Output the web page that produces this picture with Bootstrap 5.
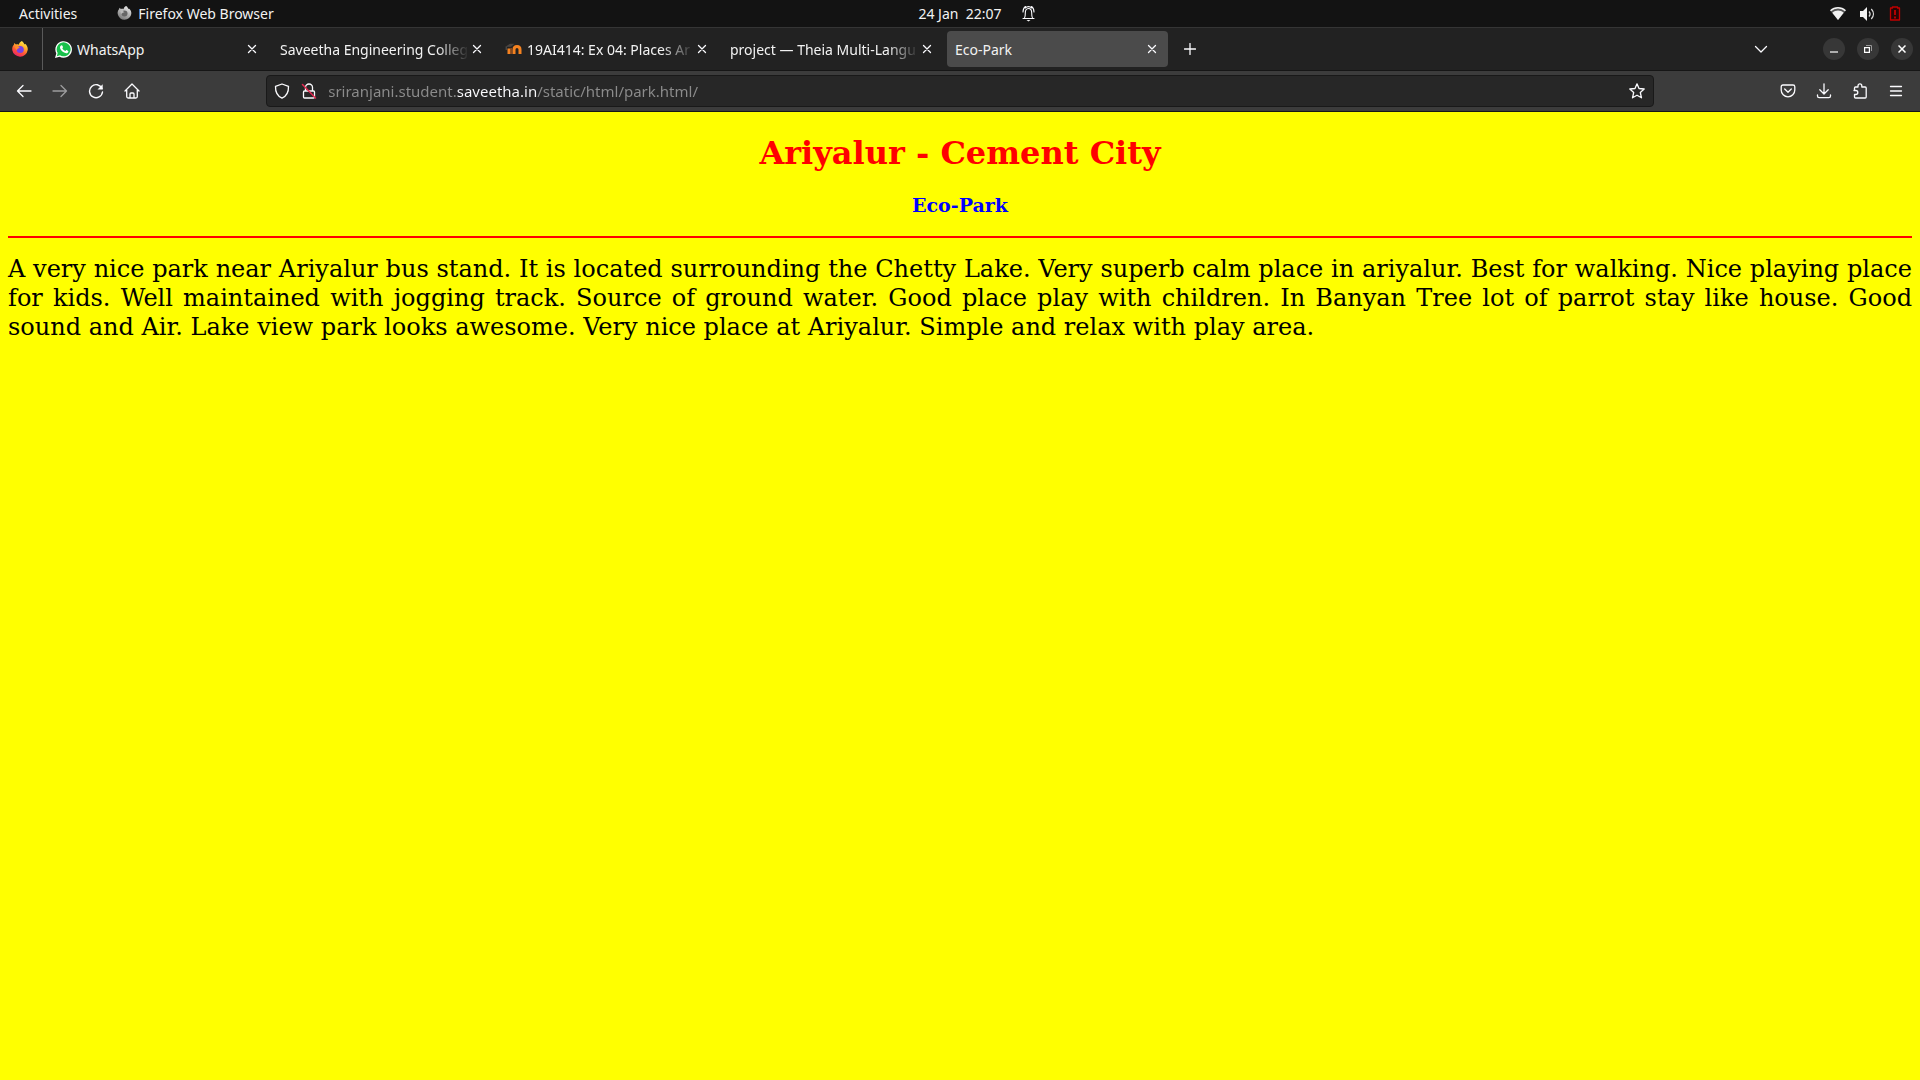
<!DOCTYPE html>
<html lang="en">
<head>
<meta charset="utf-8">
<meta name="viewport" content="width=device-width, initial-scale=1">
<title>Eco-Park</title>
<link href="https://cdn.jsdelivr.net/npm/bootstrap@5.3.0/dist/css/bootstrap.min.css" rel="stylesheet">
<style>
  body { font-family: "Noto Sans", sans-serif; font-size: 14px; line-height: 20px; color: #f2f2f2; background: #ff0; }
  svg { display: block; flex: none; }
  .ico { fill: none; stroke: #fbfbfe; stroke-width: 1.3; stroke-linecap: round; stroke-linejoin: round; }
  .plain { border: 0; padding: 0; background: none; color: inherit; display: flex; align-items: center; justify-content: center; }
  .system-bar { height: 27px; padding: 0 19px; background: #131313; }
  .system-bar .app-menu { margin-left: 40px; gap: 6px; }
  .status-icons { gap: 14px; }
  .tab-strip { height: 44px; padding-right: 7px; background: #222; border-top: 1px solid #353535; border-bottom: 1px solid #161616; }
  .pinned { width: 43px; padding-right: 2px; border-right: 1px solid #5a5a5a; }
  .tab-item { width: 221px; height: 36px; padding: 0 8px; border-radius: 4px; }
  .tab-item.current { background: #4b4b4b; }
  .tab-label { flex: 1 1 0; min-width: 0; padding-top: 2px; overflow: hidden; white-space: nowrap; color: inherit; text-decoration: none; }
  .tab-label.fades { -webkit-mask-image: linear-gradient(to left, transparent, #000 32px); mask-image: linear-gradient(to left, transparent, #000 32px); }
  .tab-close { width: 16px; height: 20px; }
  .win-group { gap: 12px; margin-left: 44px; }
  .win-btn { width: 22px; height: 22px; border-radius: 50%; background: #373737; }
  .tool-bar { height: 41px; padding: 0 6px; background: #3c3c3c; border-bottom: 1px solid #161616; }
  .tool-btn { width: 36px; height: 32px; }
  .spring { flex: 1 1 0; }
  .address { flex: 12 1 0; height: 32px; margin: 0 2px; padding: 0 8px 0 7px; gap: 11px; background: #272727; border: 1px solid #191919; border-radius: 4px; }
  .address input { flex: 1; min-width: 0; height: 24px; border: 0; padding: 0; outline: 0; font-size: 15px;
    color: transparent; caret-color: #fff;
    background: linear-gradient(to right, #8c8c8c 128px, #fbfbfe 128px 209px, #8c8c8c 209px);
    -webkit-background-clip: text; background-clip: text; }
  .park { padding: 22px 8px; color: #000; font-family: "DejaVu Serif", serif; }
  .park h1 { margin: 0 0 22px; font-size: 32px; line-height: 38px; font-weight: 700; color: #f00; }
  .park h2 { margin: 0 0 20px; font-size: 19px; line-height: 22px; font-weight: 700; color: #00f; }
  .park hr { margin: 0 0 17px; border-top: 2px solid #f00; opacity: 1; }
  .park p { margin: 0; font-size: 24px; line-height: 29px; text-align: justify; }
</style>
<script src="https://cdn.jsdelivr.net/npm/bootstrap@5.3.0/dist/js/bootstrap.bundle.min.js"></script>
</head>
<body>
<svg width="0" height="0" class="position-absolute" aria-hidden="true">
  <defs>
    <linearGradient id="flame" x1=".8" y1="0" x2=".3" y2="1"><stop offset="0" stop-color="#fff44f"/><stop offset=".35" stop-color="#ffb02a"/><stop offset=".65" stop-color="#ff5a35"/><stop offset="1" stop-color="#e81f6b"/></linearGradient>
    <linearGradient id="ash" x1=".8" y1="0" x2=".3" y2="1"><stop offset="0" stop-color="#eee"/><stop offset="1" stop-color="#777"/></linearGradient>
    <path id="fox" d="M9.8 0C11.8 1.2 12 2.8 12.4 3.5L13 2.8C15.2 4.4 16 6.6 15.7 9A7.8 7.8 0 0 1 .3 9.2C-.1 6.8.7 4.8 2 3.4L2.2 1.9 4 3.5C5 3.1 6 3.2 6.8 3.7 7.1 2 8.3.7 9.8 0Z"/>
    <symbol id="cross" viewBox="0 0 10 10"><path d="M1.5 1.5l7 7m0-7l-7 7"/></symbol>
  </defs>
</svg>

<header>
  <div class="system-bar d-flex align-items-center">
    <div class="spring d-flex align-items-center">
      <button class="plain" type="button">Activities</button>
      <button class="plain app-menu" type="button">
        <svg width="15" height="15" viewBox="0 0 16 17"><use href="#fox" fill="url(#ash)"/><circle cx="8" cy="8.5" r="3.4" fill="#666"/><path d="M3 5.500c2-.6 4 .2 5 1.500-2 0-2 1-3.500 2" fill="#bbb"/></svg>
        Firefox Web Browser
      </button>
    </div>
    <button class="plain" type="button">24 Jan&nbsp; 22:07</button>
    <div class="spring d-flex align-items-center justify-content-between">
      <svg class="ms-3 ico" width="20" height="17" viewBox="-2 0 20 17"><path d="M3 13.500h11M4.500 13c.8-1 .8-2.500.8-5C5.300 5.500 6.300 3.500 8.500 3.500s3.200 2 3.200 4.500c0 2.500 0 4 .8 5M3 7c0-2.300.8-4.300 2.500-5.500M14 7c0-2.300-.8-4.300-2.500-5.500M5.500 3C6.500 1.200 10.500 1.200 11.500 3" stroke-width="1.100"/><path d="M6.500 15h4l-2 1.600z" fill="#eee" stroke="none"/></svg>
      <div class="status-icons d-flex align-items-center">
        <svg width="16" height="14" viewBox="0 0 16 14"><path d="M.5 4C4.500-.3 11.500-.3 15.500 4L8 13z" fill="#555"/><path d="M.5 3.800C4.800-.2 11.200-.2 15.500 3.800" fill="none" stroke="#f2f2f2" stroke-width="1.500"/><path d="M2.300 5.800c3.200-3 8.200-3 11.400 0L8 13z" fill="#f2f2f2"/></svg>
        <svg width="15" height="14" viewBox="0 0 15 14"><path d="M0 4h3l4-4v14l-4-4H0z" fill="#f2f2f2"/><path d="M9 4.500c1.300 1.500 1.300 3.500 0 5M11.300 2c2.800 3 2.800 7 0 10" fill="none" stroke="#ddd" stroke-width="1.300"/></svg>
        <svg width="12" height="15" viewBox="0 0 12 15"><path d="M1.500 2h2v-1h5v1h2v12h-9z" fill="#250505" stroke="#c00000" stroke-width="1.300" stroke-linejoin="round"/><path d="M5 4h2v5H5zm0 6.500h2v2H5z" fill="#b00000"/></svg>
      </div>
    </div>
  </div>

  <nav class="tab-strip d-flex align-items-center" aria-label="Tabs">
    <a href="#" class="pinned h-100 d-flex align-items-center justify-content-center me-1" aria-label="Pinned tab">
      <svg width="16" height="17" viewBox="0 0 16 17"><use href="#fox" fill="url(#flame)"/><circle cx="8.200" cy="8.500" r="3.600" fill="#7542e5"/><path d="M2.500 5.500c2-1 4.300-.2 5.200 1.400-2 .1-2.200 1.200-3.200 2.300" fill="#ff8b2d"/></svg>
    </a>
    <div class="d-flex gap-1">
      <div class="tab-item d-flex align-items-center">
        <svg class="me-1" width="18" height="17" viewBox="0 0 18 17"><path d="M0 17l1.300-4.600A8.300 8.300 0 1 1 4.500 15.700z" fill="#fff"/><path d="M1.800 15.200l.9-3.200a7 7 0 1 1 2.300 2.300z" fill="#18c14b"/><path d="M6.200 4.400c.5-.4 1-.2 1.200.3l.6 1.400c.1.400-.5.900-.7 1.200.8 1.500 1.700 2.200 3.100 2.800.4-.4.800-1.200 1.200-1l1.600.8c.5.300 0 1.600-.7 2-1.200.7-3 .1-4.400-.9C6.300 9.700 4.900 8 5 6.300c0-.7.500-1.500 1.200-1.900z" fill="#fff"/></svg>
        <a href="#" class="tab-label">WhatsApp</a>
        <button class="plain tab-close" type="button" aria-label="Close tab"><svg class="ico" width="10" height="10"><use href="#cross"/></svg></button>
      </div>
      <div class="tab-item d-flex align-items-center">
        <a href="#" class="tab-label fades">Saveetha Engineering Colleg</a>
        <button class="plain tab-close" type="button" aria-label="Close tab"><svg class="ico" width="10" height="10"><use href="#cross"/></svg></button>
      </div>
      <div class="tab-item d-flex align-items-center">
        <svg class="me-1" width="18" height="12" viewBox="0 0 18 12"><path d="M0 4L5 .8 9.500.8 6 3.800z" fill="#4a4542"/><path d="M1.200 4v3" stroke="#666" stroke-width=".8"/><path d="M4 11V5.500M9 11V6.500C9 2.500 15 2.500 15 6.500V11" fill="none" stroke="#f58220" stroke-width="3"/><path d="M6.200 11V5" stroke="#b9591a" stroke-width="1"/></svg>
        <a href="#" class="tab-label fades">19AI414: Ex 04: Places Ar</a>
        <button class="plain tab-close" type="button" aria-label="Close tab"><svg class="ico" width="10" height="10"><use href="#cross"/></svg></button>
      </div>
      <div class="tab-item d-flex align-items-center">
        <a href="#" class="tab-label fades">project — Theia Multi-Langu</a>
        <button class="plain tab-close" type="button" aria-label="Close tab"><svg class="ico" width="10" height="10"><use href="#cross"/></svg></button>
      </div>
      <div class="tab-item current d-flex align-items-center">
        <a href="#" class="tab-label" aria-current="page">Eco-Park</a>
        <button class="plain tab-close" type="button" aria-label="Close tab"><svg class="ico" width="10" height="10"><use href="#cross"/></svg></button>
      </div>
    </div>
    <button class="plain tool-btn ms-1" type="button" aria-label="New tab"><svg class="ico" width="12" height="12"><path d="M6 .5v11M.5 6h11"/></svg></button>
    <div class="d-flex align-items-center ms-auto">
      <button class="plain tool-btn" type="button" aria-label="List all tabs"><svg class="ico" width="14" height="8"><path d="M1.500 1.500L7 7l5.500-5.500"/></svg></button>
      <div class="win-group d-flex">
        <button class="plain win-btn" type="button" aria-label="Minimize"><svg width="8" height="8"><path d="M0 7h8" stroke="#fff" stroke-width="1.200"/></svg></button>
        <button class="plain win-btn" type="button" aria-label="Restore"><svg width="8" height="8" fill="none"><path d="M.6 2.600h4.800v4.800H.6z" stroke="#fff" stroke-width="1.200"/><path d="M2 .5h5.500V6" stroke="#999"/></svg></button>
        <button class="plain win-btn" type="button" aria-label="Close window"><svg width="8" height="8"><path d="M.5.5l7 7m0-7l-7 7" stroke="#fff" stroke-width="1.500"/></svg></button>
      </div>
    </div>
  </nav>

  <div class="tool-bar d-flex align-items-center">
    <button class="plain tool-btn" type="button" aria-label="Back"><svg class="ico" width="16" height="16"><path d="M15 8H1.500M7 2.500L1.500 8 7 13.500"/></svg></button>
    <button class="plain tool-btn" type="button" aria-label="Forward"><svg class="ico opacity-50" width="16" height="16"><path d="M1 8h13.500M9 2.500L14.500 8 9 13.500"/></svg></button>
    <button class="plain tool-btn" type="button" aria-label="Reload"><svg class="ico" width="16" height="16"><path d="M14 5.500A6.500 6.500 0 1 0 14.500 9" stroke-width="1.400"/><path d="M14.700 1.300v5.200H9.500z" fill="#fbfbfe" stroke="none"/></svg></button>
    <button class="plain tool-btn" type="button" aria-label="Home"><svg class="ico" width="16" height="16"><path d="M1 8l7-7 7 7M2.700 7v6.500q0 1.500 1.500 1.500h7.600q1.500 0 1.500-1.500V7M6 15v-4q0-1 1-1h2q1 0 1 1v4"/></svg></button>
    <div class="spring"></div>
    <div class="address d-flex align-items-center">
      <svg class="ico" width="16" height="16"><path d="M8 1L14.500 3.300C14.700 9 12.500 13.200 8 15.200 3.500 13.200 1.300 9 1.500 3.300z"/></svg>
      <svg class="ico" width="16" height="16"><path d="M3.500 8h9q1 0 1 1v5q0 1-1 1h-9q-1 0-1-1V9q0-1 1-1zM4.500 8V4.500a3.500 3.500 0 0 1 7 0V8"/><path d="M1.500 1.500l13 13.500" stroke="#e22850" stroke-width="1.500"/></svg>
      <input type="text" aria-label="Address" value="sriranjani.student.saveetha.in/static/html/park.html/" spellcheck="false">
      <button class="plain" type="button" aria-label="Bookmark this page"><svg class="ico" width="16" height="16"><path d="M8 .8l2 4.700 5.200.5-3.900 3.500 1.200 5.300L8 12.200l-4.500 2.600 1.200-5.300L.8 6 6 5.500z"/></svg></button>
    </div>
    <div class="spring"></div>
    <button class="plain tool-btn" type="button" aria-label="Save to Pocket"><svg class="ico" width="16" height="16"><path d="M3 2h10q1.800 0 1.800 1.800V7A6.800 6.800 0 0 1 1.200 7V3.800Q1.200 2 3 2zM4.700 6L8 9.200 11.300 6"/></svg></button>
    <button class="plain tool-btn" type="button" aria-label="Downloads"><svg class="ico" width="16" height="16"><path d="M8 .8v10M3.800 6.800L8 11l4.200-4.200M1.500 12v1q0 1.700 1.700 1.700h9.600q1.700 0 1.700-1.700v-1"/></svg></button>
    <button class="plain tool-btn" type="button" aria-label="Extensions"><svg class="ico" width="16" height="16"><path d="M2.500 7V5q0-1 1-1H6V2.800a1.900 1.900 0 0 1 3.800 0V4h3.400q1 0 1 1v9q0 1-1 1H3.500q-1 0-1-1v-2.500h1.300a2 2 0 0 0 0-4H2z"/></svg></button>
    <button class="plain tool-btn" type="button" aria-label="Open menu"><svg class="ico" width="14" height="14"><path d="M1.500 2.500h11M1.500 7h11M1.500 11.500h11"/></svg></button>
  </div>
</header>

<main class="park">
  <h1 class="text-center">Ariyalur - Cement City</h1>
  <h2 class="text-center">Eco-Park</h2>
  <hr>
  <p>A very nice park near Ariyalur bus stand. It is located surrounding the Chetty Lake. Very superb calm place in ariyalur. Best for walking. Nice playing place for kids. Well maintained with jogging track. Source of ground water. Good place play with children. In Banyan Tree lot of parrot stay like house. Good sound and Air. Lake view park looks awesome. Very nice place at Ariyalur. Simple and relax with play area.</p>
</main>
</body>
</html>
